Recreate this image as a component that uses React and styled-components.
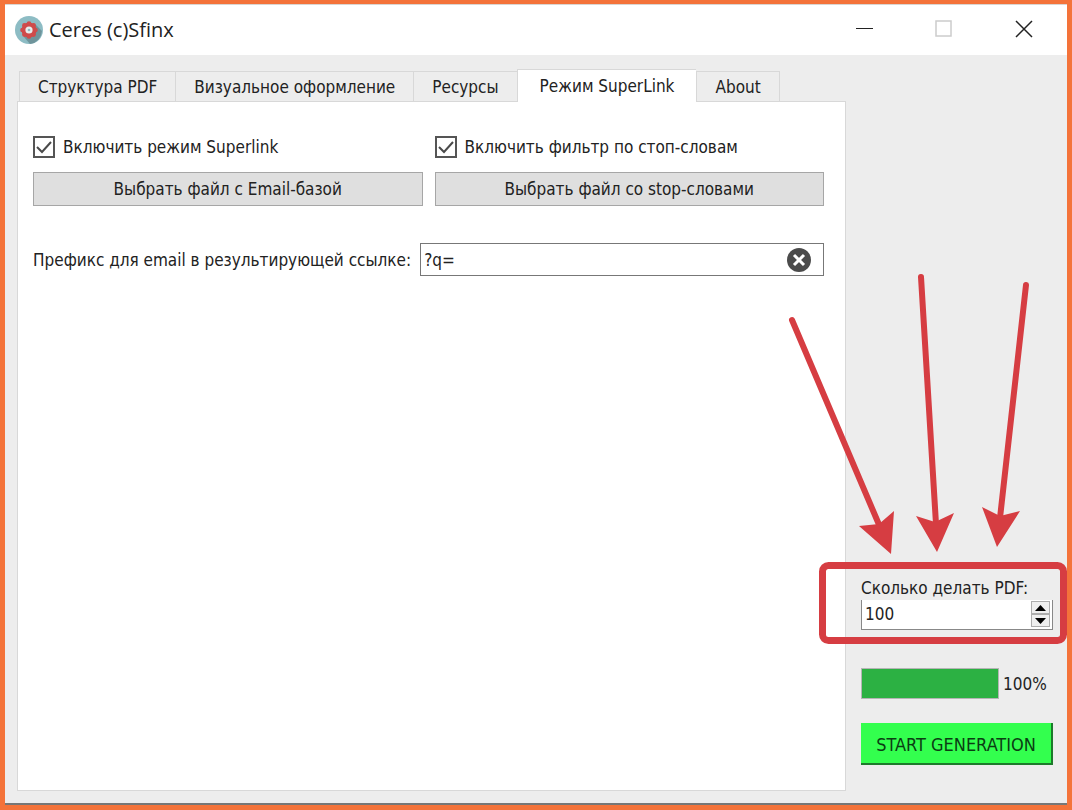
import React, { useState } from 'react';
import styled, { createGlobalStyle, css } from 'styled-components';

const GlobalStyle = createGlobalStyle`
    * {
        box-sizing: border-box;
    }
    body {
        margin: 0;
        font-family: "DejaVu Sans Condensed", "Noto Sans", sans-serif;
        font-size: 17px;
        color: #222;
    }
    button, input {
        font: inherit;
        color: inherit;
        margin: 0;
    }
`
const Frame = styled.div`
    min-height: 100vh;
    display: flex;
    flex-direction: column;
    background: #ededed;
    border: 5px solid #f4733a;
    border-top-width: 4px;
    overflow: hidden;
`
const TitleBar = styled.header`
    height: 51px;
    display: flex;
    align-items: center;
    padding: 0 3px 0 10px;
    background: #fff;
    border-top: 1px solid #d9d5d2;
`
const Title = styled.h1`
    flex: 1;
    margin: 0 0 0 6px;
    font-family: "Open Sans", "Noto Sans", sans-serif;
    font-size: 20px;
    line-height: 28px;
    font-weight: 400;
`
const WindowButton = styled.button`
    width: 80px;
    height: 50px;
    padding: 0 0 2px;
    display: flex;
    align-items: center;
    justify-content: center;
    border: 0;
    background: none;
`
const Body = styled.div`
    flex: 1;
    display: flex;
    gap: 15px;
    padding: 14px 14px 12px 12px;
    border-bottom: 2px solid #777;
`
const Main = styled.main`
    flex: 1;
    min-width: 0;
    display: flex;
    flex-direction: column;
`
const Tabs = styled.div`
    display: flex;
    align-items: flex-end;
    padding-left: 2px;
`
const Tab = styled.button`
    height: 30px;
    padding: 0 18px;
    line-height: 24px;
    white-space: nowrap;
    background: #ededed;
    border: 1px solid #d8d8d8;
    border-bottom: 0;
    border-right-width: 0;

    &:last-child {
        border-right-width: 1px;
    }
    ${props => props.$active && css`
        height: 33px;
        margin-bottom: -1px;
        padding: 0 22px;
        background: #fff;
        position: relative;
    `}
`
const Panel = styled.section`
    flex: 1;
    padding: 33px 21px 20px 15px;
    background: #fff;
    border: 1px solid #d8d8d8;
`
const Columns = styled.div`
    display: grid;
    grid-template-columns: 1fr 1fr;
    gap: 12px;
`
const Option = styled.div`
    display: flex;
    flex-direction: column;
    gap: 13px;
`
const CheckLabel = styled.label`
    display: flex;
    align-items: center;
    gap: 8px;
    line-height: 24px;
    white-space: nowrap;
`
const CheckWrap = styled.span`
    display: grid;
    width: 22px;
    height: 22px;

    > * {
        grid-area: 1 / 1;
    }
    svg {
        pointer-events: none;
    }
    input:not(:checked) + svg {
        display: none;
    }
`
const Checkbox = styled.input`
    appearance: none;
    width: 22px;
    height: 22px;
    border: 2px solid #555;
    background: #fff;
`
const FileButton = styled.button`
    height: 34px;
    background: #dfdfdf;
    border: 1px solid #a6a6a6;
`
const PrefixRow = styled.div`
    display: flex;
    align-items: center;
    gap: 9px;
    margin-top: 37px;
`
const PrefixBox = styled.div`
    flex: 1;
    min-width: 0;
    height: 33px;
    display: flex;
    align-items: center;
    padding: 0 11px 0 3px;
    background: #fff;
    border: 1px solid #777;
`
const TextInput = styled.input`
    flex: 1;
    min-width: 0;
    padding: 0;
    border: 0;
    outline: 0;
    background: none;
`
const ClearButton = styled.button`
    width: 26px;
    height: 26px;
    padding: 0;
    border: 0;
    background: none;

    svg {
        display: block;
    }
`
const Sidebar = styled.aside`
    width: 192px;
    display: flex;
    flex-direction: column;
    justify-content: flex-end;
    gap: 24px;
    padding-bottom: 26px;
`
const CountField = styled.div`
    position: relative;
    margin-bottom: 14px;
`
const CountLabel = styled.label`
    display: block;
    line-height: 24px;
    white-space: nowrap;
`
const SpinBox = styled.div`
    height: 30px;
    display: flex;
    padding: 1px 2px 2px 3px;
    background: #fff;
    border: solid #888;
    border-width: 0 1px 1px 1px;
`
const NumberInput = styled(TextInput)`
    appearance: textfield;

    &::-webkit-inner-spin-button {
        appearance: none;
    }
`
const Steps = styled.div`
    display: flex;
    flex-direction: column;
`
const StepButton = styled.button`
    flex: 1;
    width: 19px;
    padding: 0;
    display: flex;
    align-items: center;
    justify-content: center;
    background: #efefef;
    border: 1px solid #adadad;
`
const Marks = styled.svg`
    position: absolute;
    right: -15px;
    bottom: -20px;
    pointer-events: none;
`
const ProgressRow = styled.label`
    display: flex;
    align-items: center;
    gap: 4px;
`
const Progress = styled.progress`
    appearance: none;
    flex: 1;
    min-width: 0;
    height: 31px;
    border: 1px solid #b5b5b5;

    &::-webkit-progress-bar {
        background: #e6e6e6;
    }
    &::-webkit-progress-value {
        background: #2cb143;
    }
`
const Percent = styled.span`
    width: 50px;
`
const StartButton = styled.button`
    height: 42px;
    padding: 2px 0 0;
    font-size: 18px;
    white-space: nowrap;
    color: #0b3d13;
    background: #33ff4e;
    border: solid #1d7a2b;
    border-width: 0 2px 2px 0;
`

const Logo = () => (
    <svg width="28" height="28" viewBox="0 0 28 28" aria-hidden="true">
        <circle cx="14" cy="14" r="14" fill="#8dbcc4" />
        <path d="M20 8l7 7a14 14 0 0 1-12 13l-6-7z" fill="#6f949b" />
        <circle cx="14" cy="14" r="7.5" fill="#cf4b4b" />
        <g fill="#cf4b4b">
            <circle cx="14" cy="7.5" r="2.3" />
            <circle cx="18.6" cy="9.4" r="2.3" />
            <circle cx="20.5" cy="14" r="2.3" />
            <circle cx="18.6" cy="18.6" r="2.3" />
            <circle cx="14" cy="20.5" r="2.3" />
            <circle cx="9.4" cy="18.6" r="2.3" />
            <circle cx="7.5" cy="14" r="2.3" />
            <circle cx="9.4" cy="9.4" r="2.3" />
        </g>
        <circle cx="14" cy="14" r="3.6" fill="#e8eeee" />
        <circle cx="14" cy="14" r="1.3" fill="#8dbcc4" />
    </svg>
)

const Check = ({ label, checked, onChange }) => (
    <CheckLabel>
        <CheckWrap>
            <Checkbox type="checkbox" checked={checked} onChange={e => onChange(e.target.checked)} />
            <svg width="22" height="22" fill="none" stroke="#4a4a4a" strokeWidth="2">
                <path d="M4 11l5 5L18 6" />
            </svg>
        </CheckWrap>
        {label}
    </CheckLabel>
)

const Arrows = () => (
    <Marks width="280" height="380" viewBox="788 270 280 380" aria-hidden="true">
        <g fill="none" stroke="#d63d42" strokeWidth="6" strokeLinecap="round">
            <path d="M792 320L880 527" />
            <path d="M921 277L936 524" />
            <path d="M1026 285L1000 518" />
            <rect x="822.5" y="565.5" width="241" height="75" rx="6" strokeWidth="7" />
        </g>
        <g fill="#d63d42">
            <path d="M891 554L859 526L879 524L894 511z" />
            <path d="M937 552L916 516L935 522L954 513z" />
            <path d="M997 547L982 507L1000 516L1020 511z" />
        </g>
    </Marks>
)

const tabs = ['Структура PDF', 'Визуальное оформление', 'Ресурсы', 'Режим SuperLink', 'About']

const App = () => {
    const [active, setActive] = useState('Режим SuperLink')
    const [superlink, setSuperlink] = useState(true)
    const [filter, setFilter] = useState(true)
    const [prefix, setPrefix] = useState('?q=')
    const [count, setCount] = useState(100)

    return (
        <Frame>
            <GlobalStyle />
            <TitleBar>
                <Logo />
                <Title>Ceres (c)Sfinx</Title>
                <WindowButton aria-label="Свернуть">
                    <svg width="18" height="18"><path d="M1 8.5h17" stroke="#222" /></svg>
                </WindowButton>
                <WindowButton aria-label="Развернуть" disabled>
                    <svg width="18" height="18"><rect x="1" y="1" width="15" height="15" fill="none" stroke="#ccc" strokeWidth="1.5" /></svg>
                </WindowButton>
                <WindowButton aria-label="Закрыть">
                    <svg width="18" height="18"><path d="M1 1l16 16M17 1L1 17" stroke="#222" strokeWidth="1.5" /></svg>
                </WindowButton>
            </TitleBar>
            <Body>
                <Main>
                    <Tabs role="tablist">
                        {tabs.map(name => (
                            <Tab
                                key={name}
                                role="tab"
                                aria-selected={name === active}
                                $active={name === active}
                                onClick={() => setActive(name)}
                            >
                                {name}
                            </Tab>
                        ))}
                    </Tabs>
                    <Panel role="tabpanel">
                        <Columns>
                            <Option>
                                <Check label="Включить режим Superlink" checked={superlink} onChange={setSuperlink} />
                                <FileButton>Выбрать файл с Email-базой</FileButton>
                            </Option>
                            <Option>
                                <Check label="Включить фильтр по стоп-словам" checked={filter} onChange={setFilter} />
                                <FileButton>Выбрать файл со stop-словами</FileButton>
                            </Option>
                        </Columns>
                        <PrefixRow>
                            <label htmlFor="prefix">Префикс для email в результирующей ссылке:</label>
                            <PrefixBox>
                                <TextInput id="prefix" value={prefix} onChange={e => setPrefix(e.target.value)} />
                                <ClearButton aria-label="Очистить" onClick={() => setPrefix('')}>
                                    <svg width="26" height="26" viewBox="0 0 26 26">
                                        <circle cx="13" cy="13" r="12" fill="#4b4b4b" />
                                        <path d="M8 8l10 10M18 8L8 18" stroke="#fff" strokeWidth="3" />
                                    </svg>
                                </ClearButton>
                            </PrefixBox>
                        </PrefixRow>
                    </Panel>
                </Main>
                <Sidebar>
                    <CountField>
                        <CountLabel htmlFor="count">Сколько делать PDF:</CountLabel>
                        <SpinBox>
                            <NumberInput
                                id="count"
                                type="number"
                                value={count}
                                onChange={e => setCount(Number(e.target.value))}
                            />
                            <Steps>
                                <StepButton aria-label="Больше" onClick={() => setCount(count + 1)}>
                                    <svg width="11" height="6"><path d="M0 6L5.5 0L11 6z" /></svg>
                                </StepButton>
                                <StepButton aria-label="Меньше" onClick={() => setCount(count - 1)}>
                                    <svg width="11" height="6"><path d="M0 0L5.5 6L11 0z" /></svg>
                                </StepButton>
                            </Steps>
                        </SpinBox>
                        <Arrows />
                    </CountField>
                    <ProgressRow>
                        <Progress value="100" max="100" />
                        <Percent>100%</Percent>
                    </ProgressRow>
                    <StartButton>START GENERATION</StartButton>
                </Sidebar>
            </Body>
        </Frame>
    );
}

export default App;
